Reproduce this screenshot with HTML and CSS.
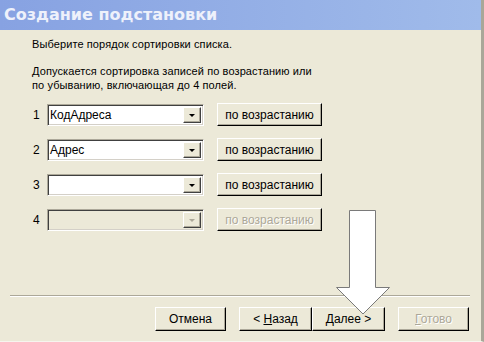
FILE: index.html
```html
<!DOCTYPE html>
<html lang="ru">
<head>
  <meta charset="UTF-8" />
  <title>Создание подстановки</title>
  <link rel="stylesheet" href="styles.css">
</head>
<body>

  <div class="wizard">
    <div class="titlebar">Создание подстановки</div>

    <div class="content">
      <p class="intro">Выберите порядок сортировки списка.</p>
      <p class="hint">Допускается сортировка записей по возрастанию или<br>по убыванию, включающая до 4 полей.</p>

      <div class="rows">
        <div class="row">
          <span class="num">1</span>
          <div class="combo"><span class="value">КодАдреса</span><span class="drop"><i class="tri"></i></span></div>
          <button class="btn order">по возрастанию</button>
        </div>
        <div class="row">
          <span class="num">2</span>
          <div class="combo"><span class="value">Адрес</span><span class="drop"><i class="tri"></i></span></div>
          <button class="btn order">по возрастанию</button>
        </div>
        <div class="row">
          <span class="num">3</span>
          <div class="combo"><span class="value"></span><span class="drop"><i class="tri"></i></span></div>
          <button class="btn order">по возрастанию</button>
        </div>
        <div class="row">
          <span class="num">4</span>
          <div class="combo disabled"><span class="value"></span><span class="drop"><i class="tri"></i></span></div>
          <button class="btn order disabled">по возрастанию</button>
        </div>
      </div>
    </div>

    <div class="separator"></div>

    <div class="footer">
      <button class="btn nav">Отмена</button>
      <div class="pair">
        <button class="btn nav">&lt; <u>Н</u>азад</button>
        <button class="btn nav"><u>Д</u>алее &gt;</button>
      </div>
      <button class="btn nav disabled"><u>Г</u>отово</button>
    </div>

    <svg class="pointer" width="56" height="108" viewBox="0 0 56 108">
      <polygon points="13.5,1.5 39.5,1.5 39.5,78.5 53.5,78.5 27,105 0.5,78.5 13.5,78.5"
               fill="#fff" stroke="#7a7a7a" stroke-width="1"/>
    </svg>
  </div>

</body>
</html>
```

FILE: styles.css
```css
body {
  margin: 0;
  background: #ece9d8;
  font-family: "Liberation Sans", Tahoma, sans-serif;
  font-size: 11px;
  color: #000;
}

.wizard {
  position: relative;
  width: 481px;
  height: 341px;
  border-right: 3px solid #a9a799;
  border-bottom: 1px solid #f6f5ee;
  display: flex;
  flex-direction: column;
  background: #ece9d8;
}

.titlebar {
  height: 30px;
  line-height: 30px;
  padding-left: 4px;
  background: linear-gradient(90deg, #87a2e2, #a0bbea);
  color: #eef1fb;
  font-family: "DejaVu Sans", Verdana, sans-serif;
  font-weight: bold;
  font-size: 16px;
  box-sizing: border-box;
}

.content {
  flex: 1;
  padding: 7px 0 0 32px;
}

.content p {
  margin: 0;
  line-height: 14px;
  letter-spacing: 0.1px;
}

.hint {
  margin-top: 13px !important;
}

.rows {
  margin-top: 11px;
  display: flex;
  flex-direction: column;
  gap: 12px;
}

.row {
  display: flex;
  align-items: center;
  height: 23px;
}

.num {
  width: 14px;
  padding-left: 1px;
  font-size: 12px;
}

.combo {
  width: 157px;
  height: 22px;
  box-sizing: border-box;
  border: 1px solid;
  border-color: #aca899 #fff #fff #aca899;
  box-shadow: inset 1px 1px #404040, inset -1px -1px #d4d0c8;
  background: #fff;
  display: flex;
  align-items: stretch;
  padding: 2px;
}

.combo .value {
  flex: 1;
  line-height: 16px;
  font-size: 12px;
}

.drop {
  width: 16px;
  background: #ece9d8;
  border: 1px solid;
  border-color: #fff #404040 #404040 #fff;
  box-shadow: inset -1px -1px #aca899;
  display: flex;
  align-items: center;
  justify-content: center;
}

.tri {
  width: 0;
  height: 0;
  border-left: 3px solid transparent;
  border-right: 3px solid transparent;
  border-top: 3px solid #000;
  margin-top: 1px;
}

.combo.disabled {
  background: #ece9d8;
}

.combo.disabled .tri {
  border-top-color: #aca899;
}

.btn {
  font-family: "Liberation Sans", Tahoma, sans-serif;
  font-size: 12px;
  background: #ece9d8;
  color: #000;
  border: 1px solid;
  border-color: #fff #000 #000 #fff;
  box-shadow: inset -1px -1px #aca899;
  padding: 0;
  box-sizing: border-box;
}

.btn.disabled {
  color: #aca899;
  text-shadow: 1px 1px #fff;
}

.order {
  margin-left: 13px;
  width: 105px;
  height: 23px;
}

.separator {
  margin: 0 11px 0 10px;
  height: 1px;
  background: #aca899;
  border-bottom: 1px solid #fff;
}

.footer {
  display: flex;
  align-items: center;
  padding: 10px 12px 10px 155px;
  gap: 13px;
}

.pair {
  display: flex;
}

.nav {
  width: 73px;
  height: 24px;
}

.nav u {
  text-decoration: underline;
}

.pointer {
  position: absolute;
  left: 336px;
  top: 209px;
}
```
